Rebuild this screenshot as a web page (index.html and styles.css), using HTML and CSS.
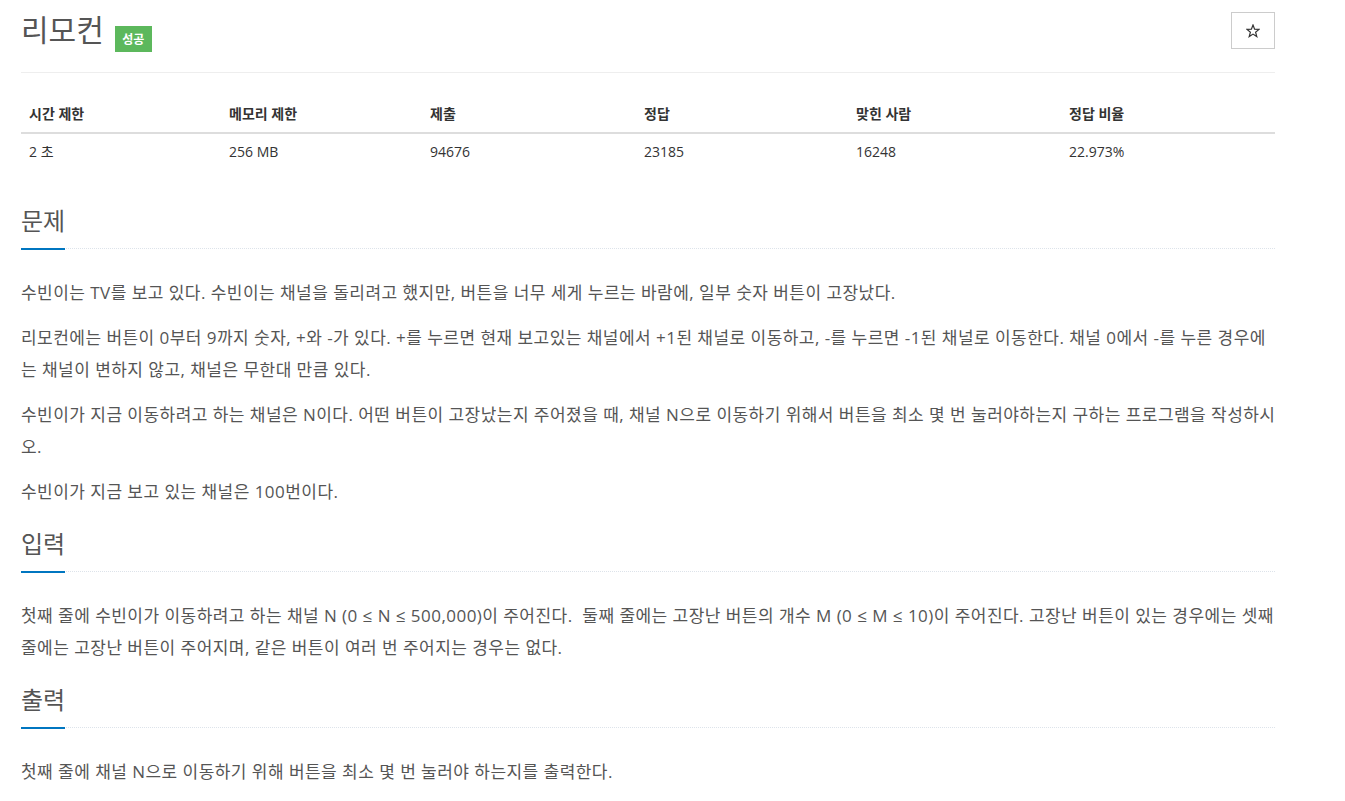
FILE: index.html
```html
<!DOCTYPE html>
<html lang="ko">
<head>
<meta charset="utf-8">
<title>리모컨</title>
<link rel="stylesheet" href="styles.css">
</head>
<body>
<div class="page">
  <div class="page-header">
    <div class="title-group">
      <h1 class="title">리모컨</h1>
      <span class="label-success">성공</span>
    </div>
    <button class="star-btn" type="button" aria-label="즐겨찾기">
      <svg width="14" height="14" viewBox="0 0 14 14"><polygon points="7,1 8.6,5.2 13,5.4 9.6,8.2 10.8,12.6 7,10.1 3.2,12.6 4.4,8.2 1,5.4 5.4,5.2" fill="none" stroke="#333" stroke-width="1.2" stroke-linejoin="miter"/></svg>
    </button>
  </div>

  <table class="info-table">
    <thead>
      <tr>
        <th class="c1">시간 제한</th>
        <th class="c2">메모리 제한</th>
        <th class="c3">제출</th>
        <th class="c4">정답</th>
        <th class="c5">맞힌 사람</th>
        <th class="c6">정답 비율</th>
      </tr>
    </thead>
    <tbody>
      <tr>
        <td>2 초</td>
        <td>256 MB</td>
        <td>94676</td>
        <td>23185</td>
        <td>16248</td>
        <td>22.973%</td>
      </tr>
    </tbody>
  </table>

  <section class="problem-section">
    <div class="headline"><h2>문제</h2></div>
    <div class="problem-text">
      <p>수빈이는 TV를 보고 있다. 수빈이는 채널을 돌리려고 했지만, 버튼을 너무 세게 누르는 바람에, 일부 숫자 버튼이 고장났다.</p>
      <p>리모컨에는 버튼이 0부터 9까지 숫자, +와 -가 있다. +를 누르면 현재 보고있는 채널에서 +1된 채널로 이동하고, -를 누르면 -1된 채널로 이동한다. 채널 0에서 -를 누른 경우에는 채널이 변하지 않고, 채널은 무한대 만큼 있다.</p>
      <p>수빈이가 지금 이동하려고 하는 채널은 N이다. 어떤 버튼이 고장났는지 주어졌을 때, 채널 N으로 이동하기 위해서 버튼을 최소 몇 번 눌러야하는지 구하는 프로그램을 작성하시오.</p>
      <p>수빈이가 지금 보고 있는 채널은 100번이다.</p>
    </div>
  </section>

  <section class="problem-section">
    <div class="headline"><h2>입력</h2></div>
    <div class="problem-text">
      <p>첫째 줄에 수빈이가 이동하려고 하는 채널 N (0 ≤ N ≤ 500,000)이 주어진다.&nbsp; 둘째 줄에는 고장난 버튼의 개수 M (0 ≤ M ≤ 10)이 주어진다. 고장난 버튼이 있는 경우에는 셋째 줄에는 고장난 버튼이 주어지며, 같은 버튼이 여러 번 주어지는 경우는 없다.</p>
    </div>
  </section>

  <section class="problem-section">
    <div class="headline"><h2>출력</h2></div>
    <div class="problem-text">
      <p>첫째 줄에 채널 N으로 이동하기 위해 버튼을 최소 몇 번 눌러야 하는지를 출력한다.</p>
    </div>
  </section>
</div>
</body>
</html>
```

FILE: styles.css
```css
html, body {
  margin: 0;
  padding: 0;
  background: #fff;
}

body {
  font-family: "Open Sans", "Noto Sans CJK KR", sans-serif;
  color: #555;
}

.page {
  width: 1254px;
  padding-left: 21px;
}

.page-header {
  display: flex;
  justify-content: space-between;
  align-items: flex-start;
  box-sizing: border-box;
  height: 73px;
  padding-top: 12px;
  border-bottom: 1px solid #eee;
}

.title-group {
  display: flex;
  align-items: flex-start;
  gap: 11px;
}

.title {
  margin: 0;
  font-size: 30px;
  line-height: 36px;
  font-weight: 400;
  color: #555;
}

.label-success {
  margin-top: 14px;
  width: 37px;
  height: 26px;
  display: flex;
  align-items: center;
  justify-content: center;
  background: #5cb85c;
  color: #fff;
  font-size: 12px;
  font-weight: 700;
}

.star-btn {
  width: 44px;
  height: 37px;
  padding: 0;
  margin: 0;
  display: flex;
  align-items: center;
  justify-content: center;
  background: #fff;
  border: 1px solid #ccc;
  border-radius: 0;
}

.info-table {
  margin-top: 23px;
  margin-bottom: 34px;
  width: 100%;
  border-collapse: collapse;
  font-size: 14px;
  line-height: 20px;
  color: #333;
}

.info-table th {
  text-align: left;
  font-weight: 700;
  padding: 8px;
  border-bottom: 2px solid #ddd;
}

.info-table td {
  padding: 8px;
}

.info-table .c1 { width: 184px; }
.info-table .c2 { width: 185px; }
.info-table .c3 { width: 198px; }
.info-table .c4 { width: 196px; }
.info-table .c5 { width: 197px; }

.headline {
  margin: 19px 0 28px;
  border-bottom: 1px dotted #dde3ea;
}

.problem-section:first-of-type .headline {
  margin-top: 0;
}

.headline h2 {
  display: inline-block;
  margin: 0 0 -2px;
  padding-bottom: 10px;
  font-size: 24px;
  line-height: 34px;
  font-weight: 400;
  color: #555;
  border-bottom: 2px solid #0076c0;
}

.problem-text {
  margin-right: -1px;
}

.problem-text p {
  margin: 0 0 13px;
  font-size: 17px;
  line-height: 32px;
  letter-spacing: 0.46px;
  word-break: break-all;
  color: #555;
}
```
